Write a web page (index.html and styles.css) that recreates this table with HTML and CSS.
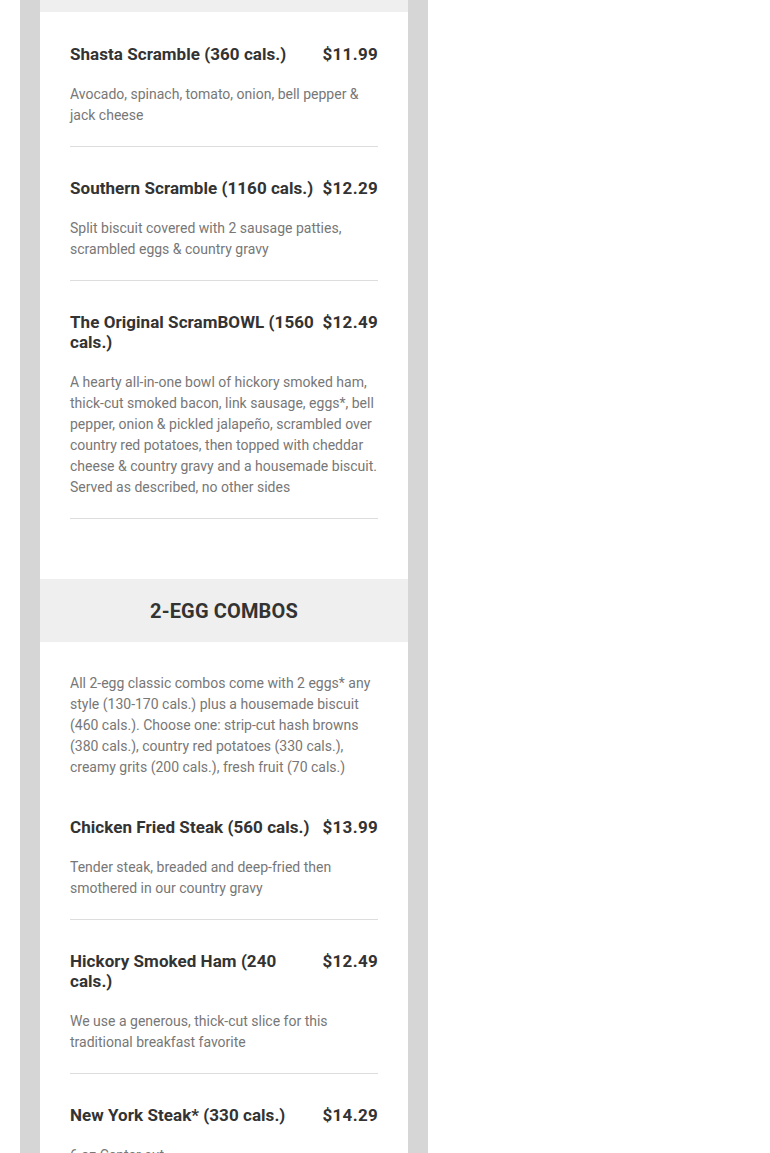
FILE: index.html
```html
<!DOCTYPE html>
<html lang="en">
<head>
<meta charset="utf-8">
<title>Menu</title>
<link rel="stylesheet" href="styles.css">
</head>
<body>
<div class="column">
  <div class="card">
    <div class="section-head section-head--cut"></div>
    <div class="section-body">
      <div class="item">
        <div class="item-top"><h3 class="item-title">Shasta Scramble (360 cals.)</h3><span class="item-price">$11.99</span></div>
        <p class="item-desc">Avocado, spinach, tomato, onion, bell pepper &amp; jack cheese</p>
      </div>
      <div class="item">
        <div class="item-top"><h3 class="item-title">Southern Scramble (1160 cals.)</h3><span class="item-price">$12.29</span></div>
        <p class="item-desc">Split biscuit covered with 2 sausage patties, scrambled eggs &amp; country gravy</p>
      </div>
      <div class="item">
        <div class="item-top"><h3 class="item-title">The Original ScramBOWL (1560 cals.)</h3><span class="item-price">$12.49</span></div>
        <p class="item-desc">A hearty all-in-one bowl of hickory smoked ham, thick-cut smoked bacon, link sausage, eggs*, bell pepper, onion &amp; pickled jalapeño, scrambled over country red potatoes, then topped with cheddar cheese &amp; country gravy and a housemade biscuit. Served as described, no other sides</p>
      </div>
    </div>
    <div class="section-head"><h2 class="section-title">2-EGG COMBOS</h2></div>
    <div class="section-body section-body--intro">
      <p class="intro">All 2-egg classic combos come with 2 eggs* any style (130-170 cals.) plus a housemade biscuit (460 cals.). Choose one: strip-cut hash browns (380 cals.), country red potatoes (330 cals.), creamy grits (200 cals.), fresh fruit (70 cals.)</p>
      <div class="item">
        <div class="item-top"><h3 class="item-title">Chicken Fried Steak (560 cals.)</h3><span class="item-price">$13.99</span></div>
        <p class="item-desc">Tender steak, breaded and deep-fried then smothered in our country gravy</p>
      </div>
      <div class="item">
        <div class="item-top"><h3 class="item-title">Hickory Smoked Ham (240 cals.)</h3><span class="item-price">$12.49</span></div>
        <p class="item-desc">We use a generous, thick-cut slice for this traditional breakfast favorite</p>
      </div>
      <div class="item">
        <div class="item-top"><h3 class="item-title">New York Steak* (330 cals.)</h3><span class="item-price">$14.29</span></div>
        <p class="item-desc">6 oz Center-cut</p>
      </div>
    </div>
  </div>
</div>
</body>
</html>
```

FILE: styles.css
```css
html, body {
  margin: 0;
  padding: 0;
  background: #ffffff;
}
body {
  font-family: Roboto, "Liberation Sans", Arial, sans-serif;
  color: #333333;
  height: 1153px;
  overflow: hidden;
}
.column {
  margin-left: 20px;
  width: 368px;
  padding: 0 20px;
  background: #d6d6d6;
  min-height: 1153px;
}
.card {
  background: #ffffff;
}
.section-head {
  background: #efefef;
  height: 63px;
  display: flex;
  align-items: center;
  justify-content: center;
}
.section-head--cut {
  height: 12px;
}
.section-title {
  margin: 0;
  font-size: 20px;
  font-weight: 700;
  color: #333333;
  letter-spacing: 0.15px;
}
.section-body {
  padding: 0 30px 60px;
}
.section-body--intro {
  padding-top: 31px;
}
.intro {
  margin: 0 0 8px;
  font-size: 14px;
  line-height: 21px;
  color: #777777;
}
.item {
  padding: 31px 0 20px;
  border-bottom: 1px solid #dddddd;
}
.section-body > .item:first-child {
  padding-top: 32px;
}
.item-top {
  display: flex;
  align-items: flex-start;
  gap: 6px;
}
.item-title {
  flex: 1;
  margin: 0;
  font-size: 17px;
  line-height: 20px;
  font-weight: 700;
  letter-spacing: 0.05px;
  color: #333333;
}
.item-price {
  flex-shrink: 0;
  white-space: nowrap;
  font-size: 17px;
  line-height: 20px;
  font-weight: 700;
  letter-spacing: 0.3px;
  color: #333333;
}
.item-desc {
  margin: 20px 0 0;
  font-size: 14px;
  line-height: 21px;
  color: #777777;
}
```
